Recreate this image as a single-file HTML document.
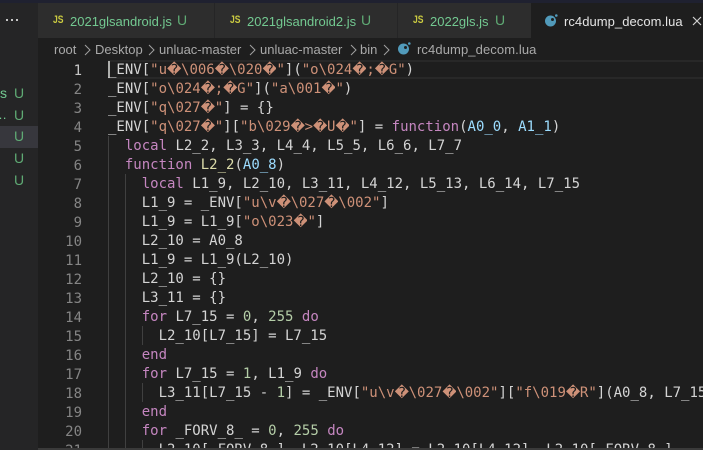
<!DOCTYPE html>
<html><head><meta charset="utf-8"><style>
html,body{margin:0;padding:0;background:#1e1e1e;}
#r{position:relative;width:703px;height:450px;overflow:hidden;background:#1e1e1e;font-family:"Liberation Sans",sans-serif;}
.a{position:absolute;}
.l{position:absolute;left:108px;height:19px;margin-top:1px;font:14px/19px "DejaVu Sans Mono",monospace;color:#d4d4d4;white-space:pre;}
.n{position:absolute;left:38px;width:44px;margin-top:1px;text-align:right;font:14px/19px "DejaVu Sans Mono",monospace;color:#858585;}
.s{color:#ce9178}.k{color:#c586c0}.f{color:#dcdcaa}.p{color:#9cdcfe}.d{color:#b5cea8}
i{display:inline-block;width:14px;height:19px;text-align:center;font:14px/19px "DejaVu Sans",sans-serif;color:#ce9178;vertical-align:top;overflow:hidden}
.t{position:absolute;top:13px;font-size:13px;line-height:17px;color:#73c991;white-space:pre;}
.u{position:absolute;font-size:14px;line-height:17px;color:#5faa74;}
.j{position:absolute;top:14px;font:bold 11px/12px "Liberation Sans",sans-serif;color:#cbcb41;transform:scaleX(.78);transform-origin:left top;}
.bc{position:absolute;top:41px;font-size:13px;line-height:17px;color:#a9a9a9;white-space:pre;}
.g{position:absolute;width:1px;background:#404040;}
.dot{position:absolute;top:19px;width:2px;height:2px;background:#c5c5c5;}
</style></head><body><div id="r">
<div class="a" style="left:0;top:0;width:703px;height:3px;background:#1f2130"></div>
<div class="a" style="left:0;top:3px;width:38px;height:447px;background:#252526"></div>
<div class="a" style="left:0;top:126px;width:38px;height:22px;background:#37373d"></div>
<div class="dot" style="left:6px"></div><div class="dot" style="left:11px"></div><div class="dot" style="left:16px"></div>
<div class="a" style="left:0;top:85px;font-size:14px;line-height:17px;color:#73c991">s</div>
<div class="a" style="left:-6px;top:106px;font-size:13px;line-height:17px;color:#73c991">…</div>
<div class="u" style="left:14px;top:85px">U</div>
<div class="u" style="left:14px;top:107px">U</div>
<div class="u" style="left:14px;top:128px">U</div>
<div class="u" style="left:14px;top:150px">U</div>
<div class="u" style="left:14px;top:172px">U</div>

<div class="a" style="left:38px;top:3px;width:665px;height:35px;background:#252526"></div>
<div class="a" style="left:38px;top:3px;width:176px;height:35px;background:#2d2d2d"></div>
<div class="a" style="left:215px;top:3px;width:182px;height:35px;background:#2d2d2d"></div>
<div class="a" style="left:398px;top:3px;width:133px;height:35px;background:#2d2d2d"></div>
<div class="a" style="left:531px;top:3px;width:172px;height:35px;background:#1e1e1e"></div>
<div class="j" style="left:53px">JS</div><div class="t" style="left:70px">2021glsandroid.js</div><div class="u" style="left:177px;top:12px">U</div>
<div class="j" style="left:230px">JS</div><div class="t" style="left:247px">2021glsandroid2.js</div><div class="u" style="left:361px;top:12px">U</div>
<div class="j" style="left:413px">JS</div><div class="t" style="left:430px">2022gls.js</div><div class="u" style="left:495px;top:12px">U</div>
<svg class="a" style="left:544px;top:13px" width="18" height="16" viewBox="0 0 18 16"><circle cx="6.5" cy="8" r="5.5" fill="#519aba"/><circle cx="8.5" cy="6.5" r="1.5" fill="#1e1e1e"/><circle cx="12.3" cy="2.5" r="1.3" fill="#519aba"/></svg>
<div class="t" style="left:564px;color:#e4e4e4;letter-spacing:.05px">rc4dump_decom.lua</div>
<svg class="a" style="left:691px;top:15px" width="12" height="12" viewBox="0 0 12 12"><path d="M2 2L10 10M10 2L2 10" stroke="#d0d0d0" stroke-width="1.2" fill="none"/></svg>

<div class="bc" style="left:54px">root</div><div class="bc" style="left:95px">Desktop</div><div class="bc" style="left:159px">unluac-master</div><div class="bc" style="left:260px">unluac-master</div><div class="bc" style="left:360px">bin</div><div class="bc" style="left:417px;letter-spacing:.1px">rc4dump_decom.lua</div>
<svg class="a" style="left:0;top:40px" width="400" height="20" fill="none" stroke="#a0a0a0" stroke-width="1"><path d="M85 5l5 5-5 5M149 5l5 5-5 5M250 5l5 5-5 5M351 5l5 5-5 5M384 5l5 5-5 5"/></svg>
<svg class="a" style="left:397px;top:41px" width="18" height="16" viewBox="0 0 18 16"><circle cx="6.5" cy="8" r="5.5" fill="#519aba"/><circle cx="8.5" cy="6.5" r="1.5" fill="#1e1e1e"/><circle cx="12.3" cy="2.5" r="1.3" fill="#519aba"/></svg>

<div class="a" style="left:108px;top:60px;width:595px;height:2px;background:#282828"></div>
<div class="a" style="left:108px;top:77px;width:595px;height:2px;background:#282828"></div>
<div class="a" style="left:108px;top:61px;width:2px;height:17px;background:#aeafad"></div>
<div class="g" style="left:108px;top:136px;height:312px"></div>
<div class="g" style="left:125px;top:174px;height:274px"></div>
<div class="g" style="left:142px;top:326px;height:19px"></div>
<div class="g" style="left:142px;top:383px;height:19px"></div>
<div class="g" style="left:142px;top:440px;height:8px"></div>

<div class="n" style="top:61px;color:#c6c6c6">1</div>
<div class="n" style="top:80px">2</div><div class="n" style="top:99px">3</div><div class="n" style="top:118px">4</div><div class="n" style="top:137px">5</div><div class="n" style="top:156px">6</div><div class="n" style="top:175px">7</div><div class="n" style="top:194px">8</div><div class="n" style="top:213px">9</div><div class="n" style="top:232px">10</div><div class="n" style="top:251px">11</div><div class="n" style="top:270px">12</div><div class="n" style="top:289px">13</div><div class="n" style="top:308px">14</div><div class="n" style="top:327px">15</div><div class="n" style="top:346px">16</div><div class="n" style="top:365px">17</div><div class="n" style="top:384px">18</div><div class="n" style="top:403px">19</div><div class="n" style="top:422px">20</div><div class="n" style="top:441px">21</div>

<div class="l" style="top:60px">_ENV[<span class="s">"u<i>�</i>\006<i>�</i>\020<i>�</i>"</span>](<span class="s">"o\024<i>�</i>;<i>�</i>G"</span>)</div>
<div class="l" style="top:79px">_ENV[<span class="s">"o\024<i>�</i>;<i>�</i>G"</span>](<span class="s">"a\001<i>�</i>"</span>)</div>
<div class="l" style="top:98px">_ENV[<span class="s">"q\027<i>�</i>"</span>] = {}</div>
<div class="l" style="top:117px">_ENV[<span class="s">"q\027<i>�</i>"</span>][<span class="s">"b\029<i>�</i>&gt;<i>�</i>U<i>�</i>"</span>] = <span class="k">function</span>(<span class="p">A0_0</span>, <span class="p">A1_1</span>)</div>
<div class="l" style="top:136px">  <span class="k">local</span> L2_2, L3_3, L4_4, L5_5, L6_6, L7_7</div>
<div class="l" style="top:155px">  <span class="k">function</span> <span class="f">L2_2</span>(<span class="p">A0_8</span>)</div>
<div class="l" style="top:174px">    <span class="k">local</span> L1_9, L2_10, L3_11, L4_12, L5_13, L6_14, L7_15</div>
<div class="l" style="top:193px">    L1_9 = _ENV[<span class="s">"u\v<i>�</i>\027<i>�</i>\002"</span>]</div>
<div class="l" style="top:212px">    L1_9 = L1_9[<span class="s">"o\023<i>�</i>"</span>]</div>
<div class="l" style="top:231px">    L2_10 = A0_8</div>
<div class="l" style="top:250px">    L1_9 = L1_9(L2_10)</div>
<div class="l" style="top:269px">    L2_10 = {}</div>
<div class="l" style="top:288px">    L3_11 = {}</div>
<div class="l" style="top:307px">    <span class="k">for</span> L7_15 = <span class="d">0</span>, <span class="d">255</span> <span class="k">do</span></div>
<div class="l" style="top:326px">      L2_10[L7_15] = L7_15</div>
<div class="l" style="top:345px">    <span class="k">end</span></div>
<div class="l" style="top:364px">    <span class="k">for</span> L7_15 = <span class="d">1</span>, L1_9 <span class="k">do</span></div>
<div class="l" style="top:383px">      L3_11[L7_15 - <span class="d">1</span>] = _ENV[<span class="s">"u\v<i>�</i>\027<i>�</i>\002"</span>][<span class="s">"f\019<i>�</i>R"</span>](A0_8, L7_15)</div>
<div class="l" style="top:402px">    <span class="k">end</span></div>
<div class="l" style="top:421px">    <span class="k">for</span> _FORV_8_ = <span class="d">0</span>, <span class="d">255</span> <span class="k">do</span></div>
<div class="l" style="top:440px">      L2_10[_FORV_8_], L2_10[L4_12] = L2_10[L4_12], L2_10[_FORV_8_]</div>
<div class="a" style="left:38px;top:448px;width:665px;height:2px;background:#3a3a3a"></div>
<div class="a" style="left:0;top:448px;width:38px;height:2px;background:#252526"></div>
</div></body></html>
